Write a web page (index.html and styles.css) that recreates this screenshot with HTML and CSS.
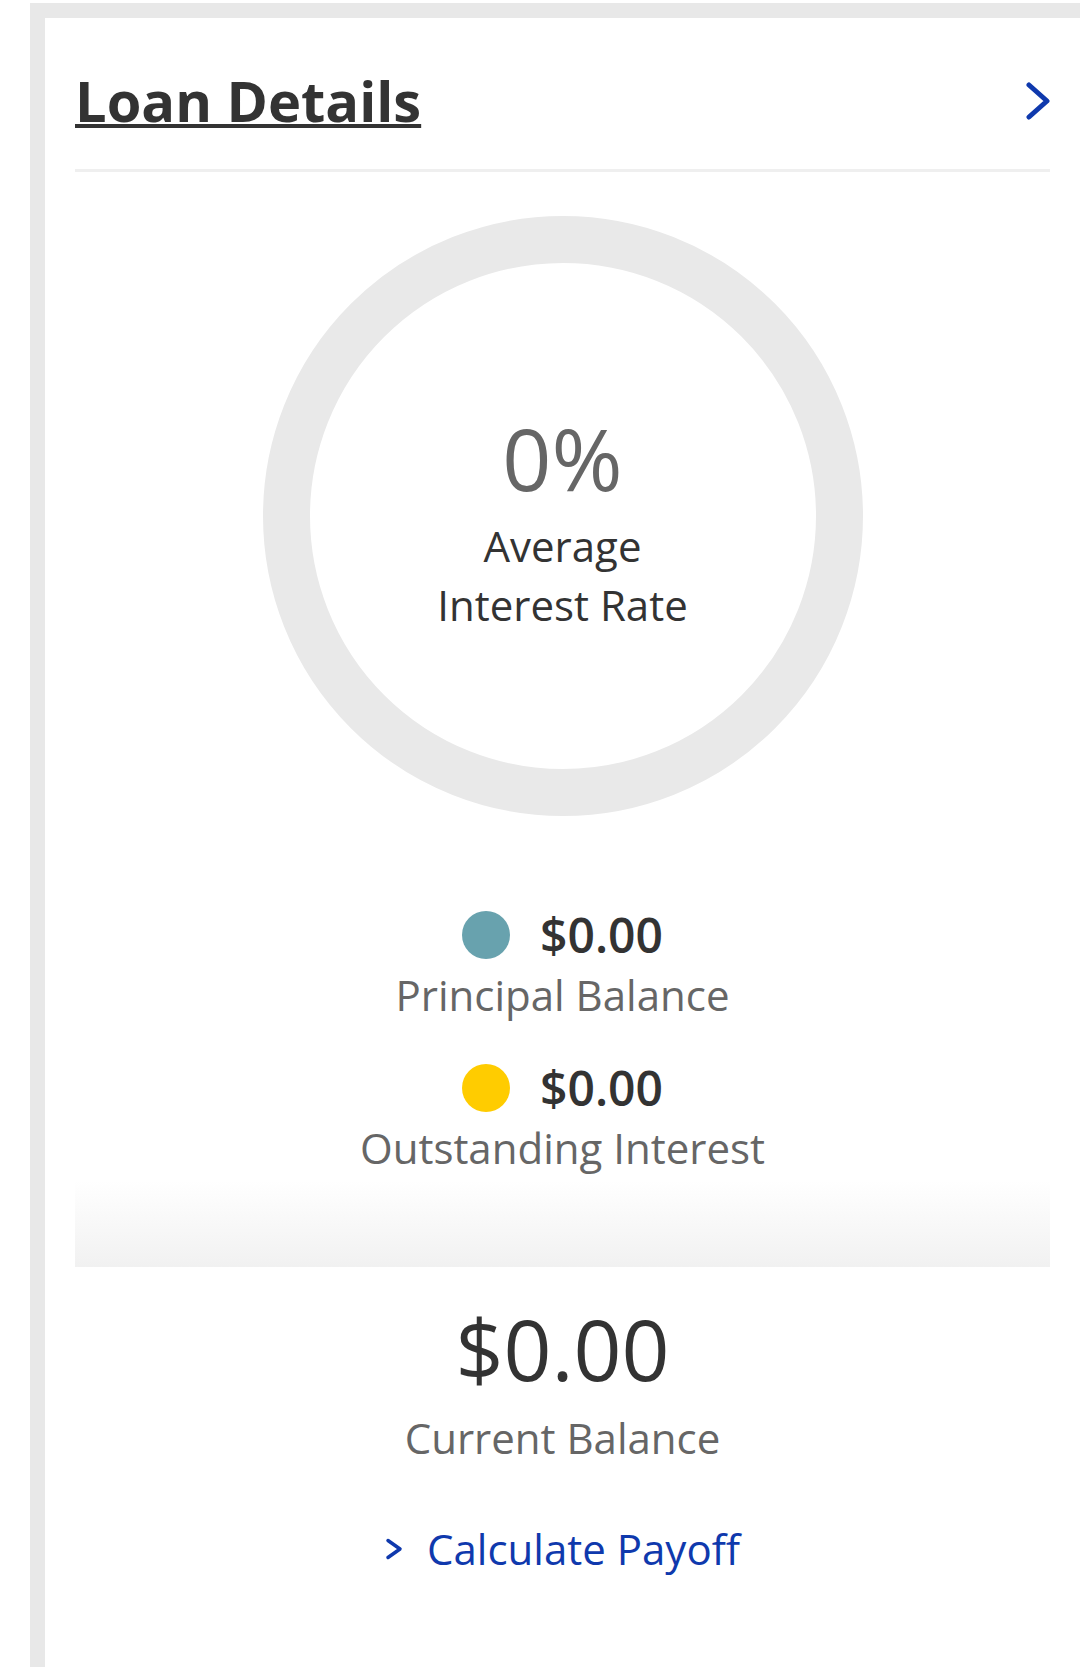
FILE: index.html
```html
<!DOCTYPE html>
<html lang="en">
<head>
<meta charset="utf-8">
<title>Loan Details</title>
<link rel="stylesheet" href="styles.css">
</head>
<body>
<div class="page">
  <section class="card">
    <header class="card-header">
      <h2 class="card-title">Loan Details</h2>
      <svg class="header-chevron" width="24" height="38" viewBox="0 0 24 38" aria-hidden="true">
        <polyline points="3,3 21,19 3,35" fill="none" stroke="#0f39ad" stroke-width="5" stroke-linecap="round" stroke-linejoin="round"/>
      </svg>
    </header>

    <div class="chart-wrap">
      <div class="ring">
        <div class="rate">0%</div>
        <div class="rate-label">Average<br>Interest Rate</div>
      </div>
    </div>

    <div class="legend">
      <div class="legend-item">
        <div class="legend-row">
          <span class="dot dot-principal"></span>
          <span class="legend-value">$0.00</span>
        </div>
        <div class="legend-label">Principal Balance</div>
      </div>
      <div class="legend-item">
        <div class="legend-row">
          <span class="dot dot-interest"></span>
          <span class="legend-value">$0.00</span>
        </div>
        <div class="legend-label">Outstanding Interest</div>
      </div>
    </div>

    <div class="fade-band"></div>

    <div class="balance">
      <div class="balance-value">$0.00</div>
      <div class="balance-label">Current Balance</div>
      <a class="payoff-link" href="#">
        <svg class="link-chevron" width="18" height="24" viewBox="0 0 18 24" aria-hidden="true">
          <polyline points="3,3.5 15,12 3,20.5" fill="none" stroke="#0f39ad" stroke-width="3.5" stroke-linecap="round" stroke-linejoin="round"/>
        </svg>
        <span>Calculate Payoff</span>
      </a>
    </div>
  </section>
</div>
</body>
</html>
```

FILE: styles.css
```css
* {
  box-sizing: border-box;
}

html, body {
  margin: 0;
  padding: 0;
  background: #ffffff;
}

body {
  font-family: "Open Sans", "Liberation Sans", sans-serif;
  color: #333333;
}

.page {
  padding-top: 3px;
  padding-left: 30px;
  min-height: 1667px;
  display: flex;
}

.card {
  flex: 1;
  background: #ffffff;
  border-top: 15px solid #e8e8e8;
  border-left: 15px solid #e8e8e8;
  padding: 0 30px 0 30px;
  display: flex;
  flex-direction: column;
}

.card-header {
  display: flex;
  align-items: center;
  justify-content: space-between;
  padding-top: 43px;
  padding-bottom: 30px;
  border-bottom: 3px solid #efefef;
}

.card-title {
  margin: 0;
  font-size: 56px;
  line-height: 78px;
  font-weight: 700;
  color: #333333;
  text-decoration: underline;
  text-decoration-thickness: 4px;
  text-underline-offset: 2px;
}

.header-chevron {
  display: block;
  margin-top: 2px;
}

.chart-wrap {
  display: flex;
  justify-content: center;
  margin-top: 44px;
}

.ring {
  width: 600px;
  height: 600px;
  border-radius: 50%;
  border: 47px solid #e9e9e9;
  display: flex;
  flex-direction: column;
  align-items: center;
  padding-top: 145px;
  text-align: center;
}

.rate {
  font-size: 86px;
  line-height: 100px;
  color: #666666;
}

.rate-label {
  margin-top: 8px;
  font-size: 42px;
  line-height: 59px;
  color: #333333;
}

.legend {
  margin-top: 89px;
  display: flex;
  flex-direction: column;
  align-items: center;
  gap: 34px;
}

.legend-item {
  display: flex;
  flex-direction: column;
  align-items: center;
}

.legend-row {
  display: flex;
  align-items: center;
  gap: 30px;
}

.dot {
  width: 48px;
  height: 48px;
  border-radius: 50%;
  display: block;
}

.dot-principal {
  background: #68a2ae;
}

.dot-interest {
  background: #ffcc00;
}

.legend-value {
  font-size: 48px;
  line-height: 60px;
  font-weight: 600;
  color: #333333;
}

.legend-label {
  font-size: 42px;
  line-height: 59px;
  color: #666666;
}

.fade-band {
  margin-top: 4px;
  height: 86px;
  background: linear-gradient(to bottom, #ffffff 0%, #f1f1f1 100%);
}

.balance {
  display: flex;
  flex-direction: column;
  align-items: center;
  padding-top: 32px;
}

.balance-value {
  font-size: 84px;
  line-height: 100px;
  color: #333333;
}

.balance-label {
  margin-top: 9px;
  font-size: 42px;
  line-height: 59px;
  color: #666666;
}

.payoff-link {
  margin-top: 52px;
  display: flex;
  align-items: center;
  gap: 24px;
  font-size: 42px;
  line-height: 59px;
  color: #0f39ad;
  text-decoration: none;
}

.link-chevron {
  display: block;
}
```
